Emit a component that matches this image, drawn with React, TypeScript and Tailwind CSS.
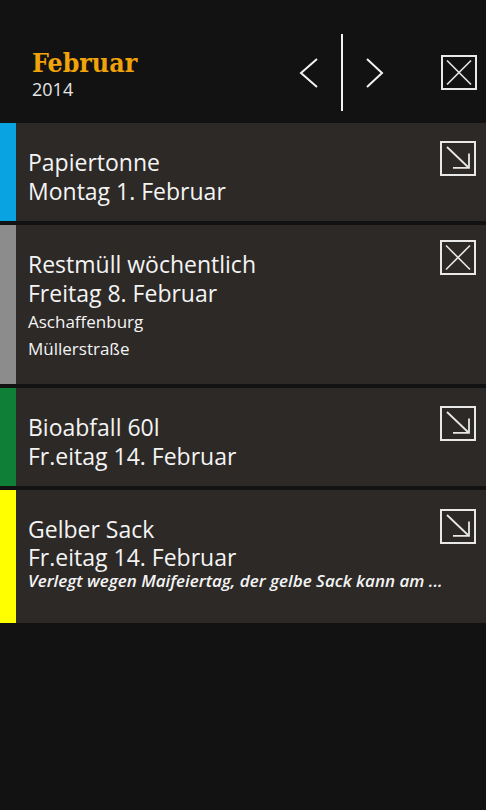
import React from "react";

const body = { fontFamily: "'Open Sans', 'Noto Sans', sans-serif" };

function ArrowBox() {
  return (
    <svg width="36" height="35" viewBox="0 0 36 35" fill="none" stroke="#e8e8e8">
      <rect x="1" y="1" width="34" height="33" strokeWidth="2" />
      <line x1="7" y1="6" x2="28.5" y2="26.5" strokeWidth="1.8" />
      <polyline points="13,26.8 29,26.8 29,12.5" strokeWidth="1.8" />
    </svg>
  );
}

function CloseBox() {
  return (
    <svg width="36" height="35" viewBox="0 0 36 35" fill="none" stroke="#e8e8e8">
      <rect x="1" y="1" width="34" height="33" strokeWidth="2" />
      <line x1="6" y1="5.5" x2="30" y2="29.5" strokeWidth="1.6" />
      <line x1="30" y1="5.5" x2="6" y2="29.5" strokeWidth="1.6" />
    </svg>
  );
}

type Card = {
  color: string;
  title: string;
  date: string;
  extra?: string[];
  note?: string;
  icon: "arrow" | "close";
  h: string;
  iconTop: string;
};

const cards: Card[] = [
  { color: "bg-[#0aa3e2]", title: "Papiertonne", date: "Montag 1. Februar", icon: "arrow", h: "h-[98px]", iconTop: "mt-[18px]" },
  {
    color: "bg-[#8c8c8c]",
    title: "Restmüll wöchentlich",
    date: "Freitag 8. Februar",
    extra: ["Aschaffenburg", "Müllerstraße"],
    icon: "close",
    h: "h-[159px]",
    iconTop: "mt-[15px]",
  },
  { color: "bg-[#0f7f37]", title: "Bioabfall 60l", date: "Fr.eitag 14. Februar", icon: "arrow", h: "h-[98px]", iconTop: "mt-[18px]" },
  {
    color: "bg-[#ffff00]",
    title: "Gelber Sack",
    date: "Fr.eitag 14. Februar",
    note: "Verlegt wegen Maifeiertag, der gelbe Sack kann am ...",
    icon: "arrow",
    h: "h-[133px]",
    iconTop: "mt-[19px]",
  },
];

export default function App() {
  return (
    <div className="w-[486px] h-[810px] bg-[#121212] overflow-hidden" style={body}>
      {/* Header */}
      <div className="flex h-[123px]">
        <div className="pl-[32px] pt-[47px]">
          <div
            className="text-[26.5px] leading-[31px] font-bold text-[#f0a30a]"
            style={{ fontFamily: "'DejaVu Serif', serif", fontStretch: "condensed" }}
          >
            Februar
          </div>
          <div className="text-[18px] leading-[22px] text-[#e6e6e6]">2014</div>
        </div>
        <div className="ml-auto mr-[9px] mt-[34px] h-[77px] flex items-center">
          <svg width="20" height="32" viewBox="0 0 20 32" fill="none" stroke="#f2f2f2" strokeWidth="2">
            <polyline points="18,2 2,16 18,30" />
          </svg>
          <div className="ml-[22px] w-[2px] h-[77px] bg-[#f2f2f2]" />
          <svg className="ml-[22px]" width="20" height="32" viewBox="0 0 20 32" fill="none" stroke="#f2f2f2" strokeWidth="2">
            <polyline points="2,2 17,16 2,30" />
          </svg>
          <div className="ml-[56px]">
            <CloseBox />
          </div>
        </div>
      </div>

      {/* Cards */}
      <div className="flex flex-col gap-[4px]">
        {cards.map((c) => (
          <div key={c.title} className={`flex ${c.h}`}>
            <div className={`w-[16px] shrink-0 ${c.color}`} />
            <div className="flex-1 min-w-0 flex bg-[#2c2927]">
              <div className="flex-1 min-w-0 pl-[12px] pt-[25px] text-[#f4f4f4]">
                <div className="text-[23px] leading-[29px]">{c.title}</div>
                <div className={`text-[23px] ${c.note ? "leading-[27px]" : "leading-[29px]"}`}>{c.date}</div>
                {c.extra?.map((e) => (
                  <div key={e} className="text-[17px] leading-[27px]">
                    {e}
                  </div>
                ))}
                {c.note && (
                  <div className="text-[17px] leading-[20px] italic font-semibold whitespace-nowrap">{c.note}</div>
                )}
              </div>
              <div className={`shrink-0 mr-[10px] ${c.iconTop}`}>{c.icon === "arrow" ? <ArrowBox /> : <CloseBox />}</div>
            </div>
          </div>
        ))}
      </div>
    </div>
  );
}
